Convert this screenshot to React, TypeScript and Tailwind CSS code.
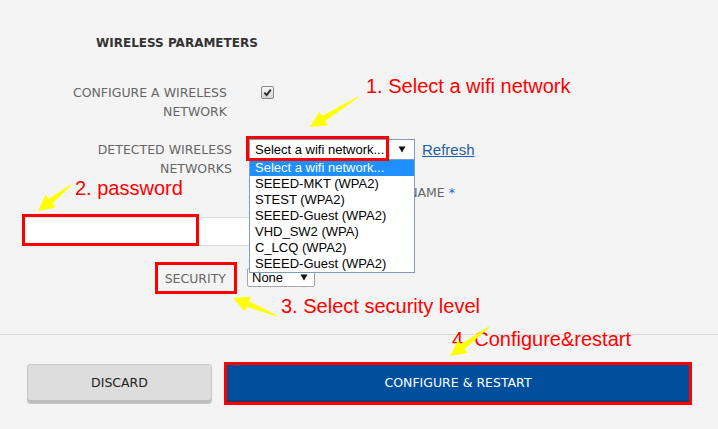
import React from 'react';

type Pt = [number, number];

// yellow annotation arrow: tapering shaft from tail to a triangular head at tip
function arrowPoints (tail: Pt, tip: Pt, head = 16, half = 8) {
  const dx = tip[0] - tail[0];
  const dy = tip[1] - tail[1];
  const len = Math.hypot(dx, dy);
  const ux = dx / len;
  const uy = dy / len;
  const nx = -uy;
  const ny = ux;
  const bx = tip[0] - ux * head;
  const by = tip[1] - uy * head;
  const p = (x: number, y: number) => `${ x.toFixed(1) },${ y.toFixed(1) }`;
  return [
    p(tail[0] + nx * 0.5, tail[1] + ny * 0.5),
    p(bx + nx * 3, by + ny * 3),
    p(bx + nx * half, by + ny * half),
    p(tip[0], tip[1]),
    p(bx - nx * half, by - ny * half),
    p(bx - nx * 3, by - ny * 3),
    p(tail[0] - nx * 0.5, tail[1] - ny * 0.5),
  ].join(' ');
}

const arrows: [Pt, Pt][] = [
  [[358, 97], [310, 127]],
  [[71, 185], [38, 211]],
  [[277, 316], [233, 298]],
  [[489, 327], [450, 356]],
];

const networks = [
  'Select a wifi network...',
  'SEEED-MKT (WPA2)',
  'STEST (WPA2)',
  'SEEED-Guest (WPA2)',
  'VHD_SW2 (WPA)',
  'C_LCQ (WPA2)',
  'SEEED-Guest (WPA2)',
];

function Caret () {
  return (
    <svg width="8" height="7" viewBox="0 0 8 7">
      <path d="M0.5 0.5 L7.5 0.5 L4 6.5 Z" fill="#111" />
    </svg>
  );
}

export default function App () {
  return (
    <div className="relative w-[718px] h-[429px] overflow-hidden bg-[#f4f4f4] font-['DejaVu_Sans',sans-serif] text-[12.5px]">
      <h2 className="pt-[36px] pl-[96px] font-bold text-[12px] leading-[14px] text-[#333]">WIRELESS PARAMETERS</h2>

      <div className="mt-[33px] flex items-start">
        <div className="w-[247px] shrink-0 pr-[20px] text-right leading-[19px] text-[#666]">
          CONFIGURE A WIRELESS<br />NETWORK
        </div>
        <span className="ml-[14px] mt-[3px] flex h-[13px] w-[13px] items-center justify-center rounded-[2px] border border-[#8a8a8a] bg-linear-to-b from-[#f6f6f6] to-[#d4d4d4]">
          <svg width="9" height="9" viewBox="0 0 9 9">
            <path d="M1.3 4.6 L3.6 7 L7.8 1.6" stroke="#2a2a2a" strokeWidth="1.9" fill="none" />
          </svg>
        </span>
      </div>

      <div className="mt-[18px] flex items-start">
        <div className="w-[247px] shrink-0 pr-[15px] pt-[1px] text-right leading-[19px] text-[#666]">
          DETECTED WIRELESS<br />NETWORKS
        </div>
        <div className="relative ml-[2px] z-10">
          <div className="flex h-[21px] w-[166px] items-center justify-between border border-[#7f9db9] bg-white pl-[5px] pr-[8px] font-['Liberation_Sans',Arial,sans-serif] text-[13px] text-black">
            <span>Select a wifi network...</span>
            <Caret />
          </div>
          <div className="absolute left-0 top-[20px] w-[166px] border border-[#7f9db9] bg-white font-['Liberation_Sans',Arial,sans-serif] text-[13px] text-black">
            {networks.map((n, i) => (
              <div key={i} className={i === 0 ? 'h-[16px] pl-[5px] leading-[16px] bg-[#1e90ff] text-white' : 'h-[16px] pl-[5px] leading-[16px]'}>{n}</div>
            ))}
          </div>
        </div>
        <a href="#refresh" className="ml-[7px] font-['Liberation_Sans',Arial,sans-serif] text-[15px] leading-[21px] text-[#1d5fa8] underline">Refresh</a>
      </div>

      <div className="mt-[5px] ml-[415px] flex w-[40px] justify-end overflow-hidden whitespace-nowrap leading-[19px] text-[#666]">
        <span>NETWORK NAME <span className="text-[#1a6fc4]">*</span></span>
      </div>
      <div className="mt-[15px] ml-[23px] h-[29px] w-[307px] border border-[#dcdcdc] bg-white" />

      <div className="mt-[22px] flex items-start">
        <div className="w-[247px] shrink-0 pr-[21px] pt-[1px] text-right leading-[19px] text-[#666]">SECURITY</div>
        <div className="flex h-[19px] w-[68px] items-center justify-between rounded-[2px] border border-[#a6a6a6] bg-white pl-[4px] pr-[6px] font-['Liberation_Sans',Arial,sans-serif] text-[13px] text-black">
          <span>None</span>
          <Caret />
        </div>
      </div>

      <div className="mt-[46px] h-px bg-[#dddddd]" />

      <div className="mt-[27px] flex items-center gap-[12px] pl-[27px]">
        <button className="flex h-[40px] w-[185px] items-center justify-center rounded-[3px] border border-[#c8c8c8] bg-[#dddddd] text-[12.5px] text-[#222] shadow-[inset_0_-3px_0_#bcbcbc]">
          DISCARD
        </button>
        <div className="h-[43px] w-[468px] border-[3px] border-[#ff0000]">
          <button className="flex h-full w-full items-center justify-center bg-[#004f9c] text-[12.5px] text-white shadow-[inset_0_-2px_0_#1c3d70]">
            CONFIGURE &amp; RESTART
          </button>
        </div>
      </div>

      {/* annotation overlay */}
      <div className="absolute left-[246px] top-[136px] z-20 h-[25px] w-[143px] border-[3px] border-[#ff0000]" />
      <div className="absolute left-[22px] top-[214px] z-20 h-[32px] w-[177px] border-[3px] border-[#ff0000]" />
      <div className="absolute left-[155px] top-[262px] z-20 h-[32px] w-[82px] border-[3px] border-[#ff0000]" />

      <div className="absolute left-[366px] top-[76px] z-20 font-['Liberation_Sans',Arial,sans-serif] text-[20px] leading-none text-[#ff0000] whitespace-nowrap">1. Select a wifi network</div>
      <div className="absolute left-[75px] top-[178px] z-20 font-['Liberation_Sans',Arial,sans-serif] text-[20px] leading-none text-[#ff0000] whitespace-nowrap">2. password</div>
      <div className="absolute left-[281px] top-[296px] z-20 font-['Liberation_Sans',Arial,sans-serif] text-[20px] leading-none text-[#ff0000] whitespace-nowrap">3. Select security level</div>
      <div className="absolute left-[452px] top-[329px] z-20 font-['Liberation_Sans',Arial,sans-serif] text-[20px] leading-none text-[#ff0000] whitespace-nowrap">4. Configure&amp;restart</div>

      <svg className="pointer-events-none absolute inset-0 z-30" width="718" height="429">
        {arrows.map(([a, b], i) => (
          <polygon key={i} points={arrowPoints(a, b)} fill="#ffff00" />
        ))}
      </svg>
    </div>
  );
}
